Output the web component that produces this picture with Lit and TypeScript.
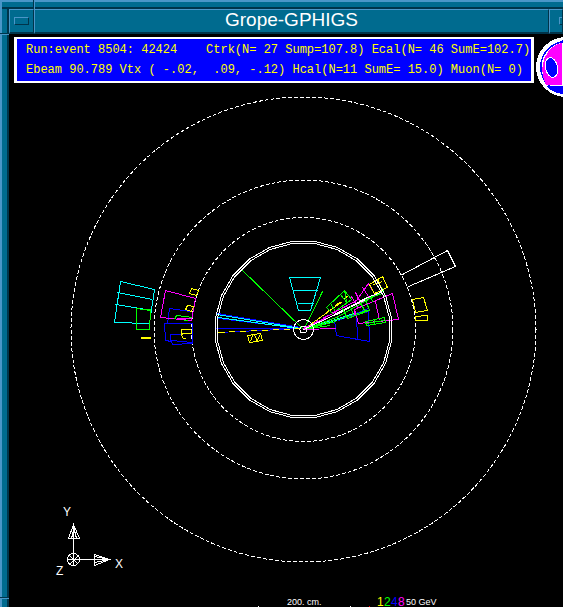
import { LitElement, html, svg, css } from "lit";
import { customElement } from "lit/decorators.js";

type Shape = [kind: string, path: string];

const CX = 303.5;
const CY = 329.5;

/** Regular polygon with flat top and sides, centred on the beam axis. */
function ring(radius: number, sides: number): string {
  const pts: string[] = [];
  for (let i = 0; i < sides; i++) {
    const a = ((i + 0.5) * 2 * Math.PI) / sides;
    pts.push(`${(CX + radius * Math.sin(a)).toFixed(1)},${(CY - radius * Math.cos(a)).toFixed(1)}`);
  }
  return pts.join(" ");
}

/* Calorimeter hits and tracks, back to front. */
const shapes: Shape[] = [
  ["cyan", "M120 281L154 289L149 323L114 322ZM117 292L152 299M115 304L151 310"],
  ["green", "M136 308L150 310L149 329H136ZM142 309L150 309"],
  ["yellow", "M140 337H150M140 338H150"],
  ["blue", "M190 311L169 308L167 323M164 323H192V343L172 344L171 341L165 340ZM170 341V334L192 333M171 340L192 342"],
  ["magenta", "M165 290L195 298L191 320L160 317ZM176 318H191"],
  ["green", "M174 319L176 315L192 317M183 320H187"],
  ["yellow", "M191 288L198 290L196 295L189 293ZM187 305L193 306L191 311L185 309ZM190 329H181V333H191V329M182 333L181 335L183 338H185"],
  ["cyan", "M289 277L320 277L310 310H298ZM293 290H317M297 303H313"],
  ["green", "M240 268L303 329M304 328L322 291"],
  ["blue", "M217 313L300 327M218 318L300 328M215 328H300M218 332L300 328"],
  ["cyan", "M216 314L300 328M218 317L297 328"],
  ["yellow dashes", "M218 332L300 328"],
  ["yellow", "M247 335L260 333L262 340L249 342ZM252 335L250 341M254 334L257 341M260 334L256 341"],
  ["blue", "M334 320L368 311L369 341L341 336L336 335ZM356 314L357 339M338 320L368 308"],
  ["cyan", "M303 329L335 319L356 312M303 329L345 317"],
  ["green", "M303 329L370 309M303 329L330 325M303 329L336 317L384 290M303 329L336 321"],
  ["magenta", "M303 329L336 328M303 329L356 300L368 283L375 295L345 309ZM351 296L358 308M355 292L361 304M362 287L370 299"],
  ["yellow", "M303 329L342 301"],
  ["yellow dashes", "M326 312L348 295"],
  ["green", "M326 307L344 290L351 299L332 313ZM330 303L335 311M340 294L347 303M344 290L346 301"],
  ["white wide", "M335 314L368 297"],
  ["white", "M303 329L335 314"],
  ["magenta dashes", "M303 328L350 303"],
  ["white", "M365 298L382 291"],
  ["magenta", "M392 293L398 319L358 323L354 309ZM375 301L379 320M354 314V309"],
  ["green", "M342 308L347 318L369 310L365 299M350 306L353 315M365 299L382 293M360 302L365 312M382 288L385 297M371 296L372 302M365 321L384 317L385 322L366 325ZM374 318V324M366 323L384 320"],
  ["yellow", "M369 284L382 276L387 287L374 293ZM377 279L382 290M373 284L382 281"],
  ["white", "M402 274L447 250L455 266L408 286"],
  ["yellow", "M412 299L423 297L427 310L415 312ZM415 316L427 315V320H415Z"],
  ["white", "M73 524V559H94M73 524L68 538H79ZM74 526L71 538M73 526L76 538M109 559L94 554V565ZM109 559L94 556M109 559L94 562M109 559H73M67 559H79M73 553V565M69 555L78 564M69 564L78 555"],
  ["white", "M257 606H258M349 606H350"],
  ["red", "M368 606H369"],
];

const scale: [number, string, string][] = [
  [377, "yellow", "1"],
  [384, "green", "2"],
  [391, "blue", "4"],
  [398, "magenta", "8"],
];

@customElement("event-display")
export class EventDisplay extends LitElement {
  static styles = css`
    :host { display: block; }
    svg { display: block; width: 100%; height: auto; shape-rendering: crispEdges; }
    .line { fill: none; stroke-width: 1; }
    .white { stroke: #fff; }
    .cyan { stroke: #0ff; }
    .green { stroke: #0f0; }
    .blue { stroke: #00f; }
    .yellow { stroke: #ff0; }
    .magenta { stroke: #f0f; }
    .red { stroke: #f00; }
    .wide { stroke-width: 2; }
    .dashes { stroke-dasharray: 6 5; }
    .dashed { stroke-dasharray: 4 2; }
    text { font: 12px "Liberation Sans Narrow", "Liberation Sans", sans-serif; fill: #fff; }
    .small { font-size: 9px; }
    .t-yellow { fill: #ff0; }
    .t-green { fill: #0f0; }
    .t-blue { fill: #00f; }
    .t-magenta { fill: #f0f; }
  `;

  render() {
    return html`
      <svg viewBox="9 34 554 573" role="img" aria-label="Detector event view">
        ${[232.5, 149.5, 112].map(
          (r) => svg`<circle class="line white dashed" cx=${CX} cy=${CY} r=${r}></circle>`
        )}
        ${shapes.map(
          ([kind, d]) => svg`<path class="line ${kind}" transform="translate(.5 .5)" d=${d}></path>`
        )}
        <polygon class="line white" points=${ring(88.8, 24)}></polygon>
        <polygon class="line white" points=${ring(86.7, 24)}></polygon>
        <circle class="line white" cx=${CX} cy=${CY} r="10"></circle>
        <circle class="line white" cx=${CX} cy=${CY} r="3.500"></circle>
        <circle class="line white" cx="73.500" cy="559.500" r="6"></circle>

        <circle cx="566" cy="67" r="30" fill="#fff"></circle>
        <circle cx="566" cy="67" r="26" fill="#00f"></circle>
        <circle cx="566" cy="67" r="24.500" fill="#fff"></circle>
        <path d="M562 43Q551 45 545 57Q539 70 546 85H562Z" fill="#f0f"></path>
        <path d="M546 86H563V94Q553 93 546 86Z" fill="#00f"></path>
        <path d="M557 43L563 40V43Z" fill="#00f"></path>
        <ellipse cx="551.500" cy="67.500" rx="6" ry="10" transform="rotate(-12 551.500 67.500)" fill="#00f" stroke="#fff"></ellipse>

        <text x="63" y="516">Y</text>
        <text x="115" y="568">X</text>
        <text x="56" y="575">Z</text>
        <text class="small" x="287" y="605">200. cm.</text>
        ${scale.map(([x, c, s]) => svg`<text class="t-${c}" x=${x} y="606">${s}</text>`)}
        <text class="small" x="406" y="605">50 GeV</text>
      </svg>
    `;
  }
}

@customElement("app-root")
export class AppRoot extends LitElement {
  static styles = css`
    :host {
      --light: #4a96c8;
      --base: #006b8f;
      --dark: #00344a;
      display: grid;
      grid-template: 9px 1fr / 9px minmax(0, 1fr);
      height: 100vh;
      overflow: hidden;
      background: #000;
    }
    .top {
      grid-column: 1 / 3;
      display: flex;
      background: linear-gradient(var(--light) 2px, var(--base) 2px 7px, var(--dark) 7px);
    }
    .top-corner {
      box-sizing: border-box;
      width: 34px;
      border-left: 2px solid var(--light);
      border-right: 1px solid var(--dark);
    }
    .top-edge { flex: 1; border-left: 1px solid var(--light); }
    .side {
      display: flex;
      flex-direction: column;
      min-height: 0;
      background: linear-gradient(90deg, var(--light) 2px, var(--base) 2px 7px, var(--dark) 7px);
    }
    .side-corner { flex: 0 0 24px; border-bottom: 1px solid var(--dark); }
    .side-edge { flex: 1; border-top: 1px solid var(--light); border-bottom: 1px solid var(--dark); }
    .side-foot { flex: 0 0 8px; border-top: 1px solid var(--light); }
    .window { min-width: 0; min-height: 0; overflow: hidden; }
    .titlebar { display: flex; height: 25px; color: #fff; }
    .control, .title {
      box-sizing: border-box;
      margin: 0;
      background: var(--base);
      border: solid;
      border-width: 1px 1px 2px;
      border-color: var(--light) var(--dark) var(--dark) var(--light);
    }
    .control { flex: none; padding: 0 4px; width: 25px; overflow: hidden; }
    .control.last { width: 14px; padding: 0 0 0 9px; }
    .glyph {
      display: block;
      box-sizing: border-box;
      width: 15px;
      height: 8px;
      border: 1px solid;
      border-color: var(--light) var(--dark) var(--dark) var(--light);
    }
    .title {
      flex: 1;
      font: 19px/20px "Liberation Sans", Arial, sans-serif;
      text-align: center;
    }
    .view { display: grid; }
    .view > * { grid-area: 1 / 1; }
    .status {
      align-self: start;
      justify-self: start;
      margin: 3px 0 0 5px;
      padding: 1px 1px 1px 9px;
      border: solid #fff;
      border-width: 2px 3px;
      background: #00f;
      color: #ff0;
      font: 12px/20px "Liberation Mono", monospace;
      white-space: pre;
    }
    .status p { margin: 0; }
  `;

  render() {
    return html`
      <div class="top"><div class="top-corner"></div><div class="top-edge"></div></div>
      <div class="side">
        <div class="side-corner"></div><div class="side-edge"></div><div class="side-foot"></div>
      </div>
      <div class="window">
        <header class="titlebar">
          <button class="control" aria-label="Window menu"><span class="glyph"></span></button>
          <div class="title">Grope-GPHIGS</div>
          <button class="control last" aria-label="Minimize"><span class="glyph"></span></button>
        </header>
        <main class="view">
          <event-display></event-display>
          <div class="status"><p>Run:event 8504: 42424    Ctrk(N= 27 Sump=107.8) Ecal(N= 46 SumE=102.7)</p><p>Ebeam 90.789 Vtx ( -.02,  .09, -.12) Hcal(N=11 SumE= 15.0) Muon(N= 0)</p></div>
        </main>
      </div>
    `;
  }
}
